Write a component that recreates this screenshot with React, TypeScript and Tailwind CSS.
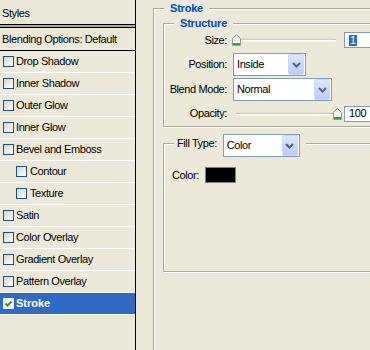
import type { ReactNode } from 'react';

/* ─── DATA ─── */

const effects = [
  { label: 'Drop Shadow' },
  { label: 'Inner Shadow' },
  { label: 'Outer Glow' },
  { label: 'Inner Glow' },
  { label: 'Bevel and Emboss' },
  { label: 'Contour', indent: true },
  { label: 'Texture', indent: true },
  { label: 'Satin' },
  { label: 'Color Overlay' },
  { label: 'Gradient Overlay' },
  { label: 'Pattern Overlay' },
  { label: 'Stroke', checked: true, selected: true },
];

/* ─── SMALL CONTROLS ─── */

function CheckBox({ checked }: { checked?: boolean }) {
  return (
    <span
      className={`flex h-[11px] w-[11px] shrink-0 items-center justify-center border ${
        checked ? 'border-[#e8eefa] bg-white' : 'border-[#1c5180] bg-gradient-to-br from-[#d6d6d0] to-white'
      }`}
    >
      {checked && (
        <svg width="9" height="9" viewBox="0 0 9 9">
          <path d="M1.5 4.5 L3.5 6.5 L7.5 2.5" fill="none" stroke="#21a121" strokeWidth="2" />
        </svg>
      )}
    </span>
  );
}

function Thumb() {
  return (
    <svg width="9" height="12" viewBox="0 0 9 12">
      <path d="M0.5 4.5 L4.5 0.5 L8.5 4.5 L8.5 11.5 L0.5 11.5 Z" fill="#f5f5f0" stroke="#9a9a90" />
      <rect x="1" y="9" width="7" height="2" fill="#2fa82f" />
    </svg>
  );
}

function Slider({ at }: { at: 'start' | 'end' }) {
  return (
    <div className="relative h-full w-[104px] shrink-0">
      <div className="absolute left-[3px] top-1/2 h-[3px] w-[100px] -translate-y-1/2 rounded-[2px] border-t border-[#9c9b91] bg-white" />
      <div
        className={`absolute top-1/2 flex -translate-y-1/2 ${at === 'start' ? 'left-[-1px]' : 'left-[100px]'}`}
      >
        <Thumb />
      </div>
    </div>
  );
}

function TextBox({ children }: { children: ReactNode }) {
  return (
    <div className="ml-[7px] flex h-[16px] w-[40px] shrink-0 items-center border border-[#7f9db9] bg-white pl-[4px]">
      {children}
    </div>
  );
}

function Select({ value, width }: { value: string; width: string }) {
  return (
    <div className={`flex h-[23px] shrink-0 items-center border border-[#7f9db9] bg-white pl-[3px] ${width}`}>
      <span className="flex-1">{value}</span>
      <span className="mr-[1px] flex h-full w-[16px] items-center justify-center rounded-[2px] border border-[#c9d7fa] bg-gradient-to-b from-[#dde7fe] to-[#b9cdf8]">
        <svg width="9" height="6" viewBox="0 0 9 6">
          <path d="M1 1 L4.5 4.5 L8 1" fill="none" stroke="#4d6185" strokeWidth="2" />
        </svg>
      </span>
    </div>
  );
}

function Row({ label, className, children }: { label: string; className: string; children: ReactNode }) {
  return (
    <div className={`flex items-center ${className}`}>
      <span className="w-[63px] shrink-0 text-right">{label}</span>
      <div className="ml-[6px] flex h-full items-center">{children}</div>
    </div>
  );
}

/* ─── SIDEBAR ─── */

function Sidebar() {
  return (
    <div className="flex w-[136px] shrink-0 flex-col border-r border-black">
      <div className="flex h-[24px] items-center pl-[2px] pt-[2px]">Styles</div>
      <div className="h-[4px] border-y border-black bg-[#aca899]" />
      <div className="flex h-[23px] items-center border-b border-black pl-[2px]">Blending Options: Default</div>
      {effects.map((fx) => (
        <div
          key={fx.label}
          className={`flex h-[22px] items-center gap-[2px] border-b border-white ${
            fx.indent ? 'pl-[16px]' : 'pl-[3px]'
          } ${fx.selected ? 'bg-[#316ac5] font-bold tracking-normal text-white' : ''}`}
        >
          <CheckBox checked={fx.checked} />
          <span className={fx.indent ? 'ml-[1px]' : ''}>{fx.label}</span>
        </div>
      ))}
    </div>
  );
}

/* ─── APP ─── */

export default function App() {
  return (
    <div className="flex h-[350px] w-[370px] overflow-hidden bg-[#ece9d8] font-['Liberation_Sans',Arial,sans-serif] text-[11px] tracking-[-0.4px] text-black">
      <Sidebar />

      <div className="flex-1 overflow-hidden pt-[1px]">
        {/* Stroke group */}
        <fieldset className="ml-[17px] h-[400px] w-[260px] border border-[#aca899] pl-[9px] shadow-[inset_1px_1px_0_#fff,1px_1px_0_#fff]">
          <legend className="ml-[1px] bg-[#ece9d8] px-[6px] font-bold leading-[14px] tracking-[-0.2px] text-[#0046d5]">
            Stroke
          </legend>

          {/* Structure */}
          <fieldset className="mt-[1px] w-[230px] border border-[#aca899] pb-[4px] pt-[2px] shadow-[inset_1px_1px_0_#fff,1px_1px_0_#fff]">
            <legend className="ml-[10px] bg-[#ece9d8] px-[6px] font-bold leading-[14px] tracking-[-0.2px] text-[#0046d5]">
              Structure
            </legend>
            <Row label="Size:" className="h-[16px]">
              <Slider at="start" />
              <TextBox>
                <span className="inline-block bg-[#316ac5] px-[1px] leading-[11px] text-white">1</span>
              </TextBox>
            </Row>
            <Row label="Position:" className="mt-[5px] h-[23px]">
              <Select value="Inside" width="w-[73px]" />
            </Row>
            <Row label="Blend Mode:" className="mt-[2px] h-[23px]">
              <Select value="Normal" width="w-[99px]" />
            </Row>
            <Row label="Opacity:" className="mt-[4px] h-[17px]">
              <Slider at="end" />
              <TextBox>100</TextBox>
            </Row>
          </fieldset>

          {/* Fill type */}
          <fieldset className="mt-[7px] h-[138px] w-[230px] border border-[#aca899] shadow-[inset_1px_1px_0_#fff,1px_1px_0_#fff]">
            <legend className="ml-[10px] bg-[#ece9d8] pl-[3px] pr-[6px]">
              <div className="flex h-[18px] items-start gap-[6px]">
                <span className="leading-[18px]">Fill Type:</span>
                <Select value="Color" width="w-[77px]" />
              </div>
            </legend>
            <div className="flex items-center pl-[8px] pt-[15px]">
              <span className="w-[33px]">Color:</span>
              <span className="h-[16px] w-[31px] border border-[#808080] bg-black" />
            </div>
          </fieldset>
        </fieldset>
      </div>
    </div>
  );
}
